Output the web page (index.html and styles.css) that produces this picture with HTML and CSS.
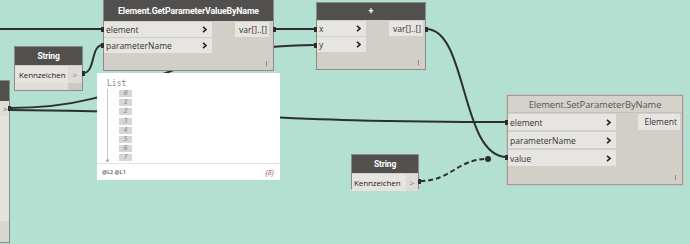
FILE: index.html
```html
<!DOCTYPE html>
<html>
<head>
<meta charset="utf-8">
<link rel="stylesheet" href="styles.css">
</head>
<body>
<div class="canvas">
  <svg class="wires" width="690" height="244" viewBox="0 0 690 244">
    <g fill="none" stroke="#2e2e2e" stroke-width="2">
      <path d="M0,29 L103,29"/>
      <path d="M83,73 C96,73 90,45 103,45"/>
      <path d="M274,29 L316,29"/>
      <path d="M9,108 C150,108 160,45 316,45"/>
      <path d="M9,110 C258,112 258,122 507,122"/>
      <path d="M426,29 C468,29 460,157 507,157"/>
      <path d="M420,181 C452,181 456,159 488,159" stroke-dasharray="5,3"/>
    </g>
    <circle cx="488" cy="159" r="3" fill="#2e2e2e"/>
  </svg>

  <div class="node left-node">
    <div class="hdr"></div>
    <div class="lrow"><span class="gt">&gt;</span></div>
    <div class="lfoot"></div>
  </div>

  <div class="node n-get">
    <div class="hdr">Element.GetParameterValueByName</div>
    <div class="ports">
      <div class="ins">
        <div class="port"><span>element</span><svg class="chev" width="5" height="7" viewBox="0 0 5 7"><path d="M1,0.8 L4,3.5 L1,6.2" fill="none" stroke="#222" stroke-width="1.6"/></svg></div>
        <div class="port"><span>parameterName</span><svg class="chev" width="5" height="7" viewBox="0 0 5 7"><path d="M1,0.8 L4,3.5 L1,6.2" fill="none" stroke="#222" stroke-width="1.6"/></svg></div>
      </div>
      <div class="outs"><div class="oport">var[]..[]</div></div>
    </div>
    <div class="foot"><i class="tick"></i></div>
  </div>

  <div class="node n-plus">
    <div class="hdr plus">+</div>
    <div class="ports">
      <div class="ins">
        <div class="port"><span>x</span><svg class="chev" width="5" height="7" viewBox="0 0 5 7"><path d="M1,0.8 L4,3.5 L1,6.2" fill="none" stroke="#222" stroke-width="1.6"/></svg></div>
        <div class="port"><span>y</span><svg class="chev" width="5" height="7" viewBox="0 0 5 7"><path d="M1,0.8 L4,3.5 L1,6.2" fill="none" stroke="#222" stroke-width="1.6"/></svg></div>
      </div>
      <div class="outs"><div class="oport">var[]..[]</div></div>
    </div>
    <div class="foot"><i class="tick"></i></div>
  </div>

  <div class="node str s1">
    <div class="hdr">String</div>
    <div class="srow"><span class="sval">Kennzeichen</span><span class="sout">&gt;</span></div>
    <div class="sfoot"><span class="sfill"></span><span class="sfoot-port"></span></div>
  </div>

  <div class="watch">
    <div class="wlist">
      <div class="wtitle">List</div>
      <div class="wtree">
        <div class="wline"></div>
        <div class="witems">
          <span class="wi">0</span><span class="wi">1</span><span class="wi">2</span><span class="wi">3</span>
          <span class="wi">4</span><span class="wi">5</span><span class="wi">6</span><span class="wi">7</span>
        </div>
      </div>
    </div>
    <div class="wfoot"><span class="lv">@L2 @L1</span><span class="cnt">{8}</span></div>
  </div>

  <div class="node str s2">
    <div class="hdr">String</div>
    <div class="srow"><span class="sval">Kennzeichen</span><span class="sout">&gt;</span></div>
  </div>

  <div class="node n-set">
    <div class="hdr light">Element.SetParameterByName</div>
    <div class="ports">
      <div class="ins">
        <div class="port"><span>element</span><svg class="chev" width="5" height="7" viewBox="0 0 5 7"><path d="M1,0.8 L4,3.5 L1,6.2" fill="none" stroke="#222" stroke-width="1.6"/></svg></div>
        <div class="port"><span>parameterName</span><svg class="chev" width="5" height="7" viewBox="0 0 5 7"><path d="M1,0.8 L4,3.5 L1,6.2" fill="none" stroke="#222" stroke-width="1.6"/></svg></div>
        <div class="port"><span>value</span><svg class="chev" width="5" height="7" viewBox="0 0 5 7"><path d="M1,0.8 L4,3.5 L1,6.2" fill="none" stroke="#222" stroke-width="1.6"/></svg></div>
      </div>
      <div class="outs"><div class="oport">Element</div></div>
    </div>
    <div class="foot"><i class="tick"></i></div>
  </div>

  <i class="pin in" style="left:101px;top:27px"></i>
  <i class="pin in" style="left:101px;top:43px"></i>
  <i class="pin out" style="left:273px;top:27px"></i>
  <i class="pin in" style="left:314px;top:27px"></i>
  <i class="pin in" style="left:314px;top:43px"></i>
  <i class="pin out" style="left:425px;top:27px"></i>
  <i class="pin in" style="left:505px;top:120px"></i>
  <i class="pin in" style="left:505px;top:155px"></i>
  <i class="pin out" style="left:8px;top:106px"></i>
  <i class="pin out" style="left:82px;top:71px"></i>
  <i class="pin out" style="left:418px;top:179px"></i>
</div>
</body>
</html>
```

FILE: styles.css
```css
html, body {
  margin: 0;
  padding: 0;
}
body {
  background: #b3e0d0;
  font-family: "Open Sans", "Noto Sans", sans-serif;
  overflow: hidden;
}
.canvas {
  position: relative;
  width: 690px;
  height: 244px;
  overflow: hidden;
  background: #b3e0d0;
}
.wires {
  position: absolute;
  left: 0;
  top: 0;
}
.node {
  position: absolute;
  box-sizing: border-box;
  border: 1px solid #8e8b87;
  background: #d2cec8;
  display: flex;
  flex-direction: column;
}
.hdr {
  height: 19px;
  flex: none;
  background: #52504e;
  color: #fff;
  font-family: Roboto, "Open Sans", sans-serif;
  font-weight: 700;
  font-size: 8.8px;
  line-height: 19px;
  text-align: center;
  letter-spacing: -0.15px;
}
.hdr.plus {
  font-size: 9px;
  height: 17px;
  line-height: 17px;
}
.hdr.light {
  background: #d5d2cc;
  color: #555;
  font-family: "Open Sans", sans-serif;
  font-weight: 400;
  font-size: 9.4px;
  letter-spacing: -0.1px;
  border-bottom: 1px solid #c4c0ba;
  height: 16px;
  line-height: 17px;
}
.ports {
  display: flex;
  justify-content: space-between;
  padding-top: 1px;
}
.ins {
  display: flex;
  flex-direction: column;
  gap: 1px;
}
.port {
  height: 15px;
  background: #e7e5e2;
  display: flex;
  align-items: center;
  justify-content: space-between;
  padding: 0 5px 0 2px;
  font-size: 8.5px;
  color: #333;
}
.chev {
  display: block;
}
.outs {
  display: flex;
  flex-direction: column;
  margin-right: 2px;
}
.oport {
  height: 15px;
  background: #e7e5e2;
  font-size: 8.5px;
  line-height: 15px;
  color: #333;
  padding: 0 2px 0 4px;
}
.foot {
  flex: 1;
  position: relative;
}
.tick {
  position: absolute;
  right: 6px;
  bottom: 4px;
  width: 1px;
  height: 5px;
  background: #8f8c88;
}
.n-get {
  left: 103px;
  top: -1px;
  width: 171px;
  height: 72px;
}
.n-get .hdr {
  height: 21px;
  line-height: 22px;
}
.n-get .ins {
  width: 108px;
}
.n-get .outs {
  margin-right: 4px;
}
.n-plus {
  left: 316px;
  top: 2px;
  width: 110px;
  height: 68px;
}
.n-plus .ins {
  width: 49px;
}
.n-set {
  left: 507px;
  top: 95px;
  width: 176px;
  height: 90px;
  border-color: #9e9b97;
  box-shadow: 0 0 0 1px #c9c6c1;
}
.n-set .ins {
  width: 108px;
  gap: 2px;
}
.n-set .ports {
  padding-top: 1px;
}
.n-set .port {
  height: 16px;
}
.n-set .oport {
  height: 16px;
  line-height: 16px;
  padding: 0 3px 0 6px;
}
.left-node {
  left: -10px;
  top: 80px;
  width: 20px;
  height: 163px;
  background: #e5e2de;
}
.left-node .hdr {
  height: 20px;
}
.lrow {
  height: 14px;
  margin-top: 1px;
  background: #e0ddd9;
  font-size: 8px;
  color: #555;
  line-height: 14px;
  padding-left: 12px;
}
.lfoot {
  margin-top: auto;
  height: 21px;
  background: #d9d6d1;
}
.str .hdr {
  height: 18px;
  line-height: 18px;
  font-size: 8.5px;
}
.s1 {
  left: 14px;
  top: 46px;
  width: 69px;
  height: 45px;
}
.s2 {
  left: 351px;
  top: 154px;
  width: 68px;
  height: 35px;
}
.srow {
  display: flex;
  height: 17px;
  margin-top: 1px;
}
.sval {
  flex: 1;
  background: #e7e4e0;
  font-size: 8px;
  line-height: 17px;
  color: #222;
  padding-left: 4px;
  letter-spacing: -0.1px;
}
.sout {
  width: 14px;
  background: #dedbd6;
  color: #777;
  font-size: 8px;
  line-height: 17px;
  text-align: center;
}
.s2 .sout {
  width: 12px;
}
.s2 .sval {
  padding-left: 2px;
}
.sfoot {
  flex: 1;
  display: flex;
}
.sfill {
  flex: 1;
  background: #e1deda;
}
.sfoot-port {
  width: 14px;
  background: #cdc9c3;
}
.watch {
  position: absolute;
  left: 97px;
  top: 73px;
  width: 183px;
  height: 107px;
  background: #fff;
  box-sizing: border-box;
  display: flex;
  flex-direction: column;
}
.wlist {
  height: 91px;
  border-bottom: 1px solid #e4e4e4;
  padding: 6px 0 0 10px;
  box-sizing: border-box;
}
.wtitle {
  font-family: "DejaVu Sans Mono", monospace;
  font-size: 8px;
  color: #8a8a8a;
  line-height: 9px;
}
.wtree {
  display: flex;
}
.wline {
  width: 1px;
  height: 72px;
  background: #c8c8c8;
  margin-top: 1px;
  position: relative;
}
.wline::after {
  content: "";
  position: absolute;
  left: -1px;
  bottom: -1px;
  width: 3px;
  height: 3px;
  border-radius: 50%;
  background: #aaa;
}
.witems {
  display: flex;
  flex-direction: column;
  gap: 2.2px;
  margin-left: 11px;
  padding-top: 2px;
}
.wi {
  display: block;
  width: 13px;
  height: 7px;
  background: #d6d6d6;
  color: #8c8c8c;
  font-family: "DejaVu Sans Mono", monospace;
  font-style: italic;
  font-size: 7px;
  line-height: 7px;
  text-align: center;
}
.wfoot {
  flex: 1;
  display: flex;
  justify-content: space-between;
  align-items: center;
  padding: 0 6px 0 5px;
}
.lv {
  font-size: 5.5px;
  font-weight: 700;
  color: #777;
}
.cnt {
  font-size: 7px;
  font-style: italic;
  color: #9b4b4b;
}
.pin {
  position: absolute;
  width: 3px;
  height: 5px;
  background: #2e2e2e;
}
```
